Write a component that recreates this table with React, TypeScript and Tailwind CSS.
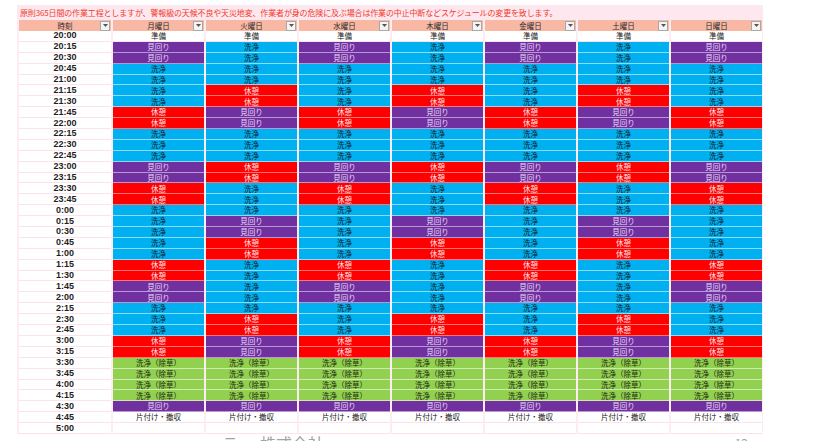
type Code = 'P' | 'M' | 'W' | 'R' | 'G' | 'K' | 'E'

type CellStyle = {
  label: string
  className: string
}

const cellStyles: Record<Code, CellStyle> = {
  P: { label: '準備', className: 'bg-white text-[#222] border-[#fbe3ea]' },
  M: { label: '見回り', className: 'bg-[#7030a0] text-[#eadcf6] border-white/50' },
  W: { label: '洗浄', className: 'bg-[#00b0f0] text-[#10202c] border-white/55' },
  R: { label: '休憩', className: 'bg-[#ff0000] text-[#ffe2e2] border-white/45' },
  G: { label: '洗浄（除草）', className: 'bg-[#92d050] text-[#1d2a10] border-white/55' },
  K: { label: '片付け・撤収', className: 'bg-white text-[#222] border-[#fbe3ea]' },
  E: { label: '', className: 'bg-white text-[#222] border-[#fbe3ea]' },
}

const days = ['月曜日', '火曜日', '水曜日', '木曜日', '金曜日', '土曜日', '日曜日']

const schedule: [string, string][] = [
  ['20:00', 'PPPPPPP'],
  ['20:15', 'MWMWMWM'],
  ['20:30', 'MWMWMWM'],
  ['20:45', 'WWWWWWW'],
  ['21:00', 'WWWWWWW'],
  ['21:15', 'WRWRWRW'],
  ['21:30', 'WRWRWRW'],
  ['21:45', 'RMRMRMR'],
  ['22:00', 'RMRMRMR'],
  ['22:15', 'WWWWWWW'],
  ['22:30', 'WWWWWWW'],
  ['22:45', 'WWWWWWW'],
  ['23:00', 'MRMRMRM'],
  ['23:15', 'MRMRMRM'],
  ['23:30', 'RWRWRWR'],
  ['23:45', 'RWRWRWR'],
  ['0:00', 'WWWWWWW'],
  ['0:15', 'WMWMWMW'],
  ['0:30', 'WMWMWMW'],
  ['0:45', 'WRWRWRW'],
  ['1:00', 'WRWRWRW'],
  ['1:15', 'RWRWRWR'],
  ['1:30', 'RWRWRWR'],
  ['1:45', 'MWMWMWM'],
  ['2:00', 'MWMWMWM'],
  ['2:15', 'WWWWWWW'],
  ['2:30', 'WRWRWRW'],
  ['2:45', 'WRWRWRW'],
  ['3:00', 'RMRMRMR'],
  ['3:15', 'RMRMRMR'],
  ['3:30', 'GGGGGGG'],
  ['3:45', 'GGGGGGG'],
  ['4:00', 'GGGGGGG'],
  ['4:15', 'GGGGGGG'],
  ['4:30', 'MMMMMMM'],
  ['4:45', 'KKKKKKK'],
  ['5:00', 'EEEEEEE'],
]

function FilterButton() {
  return (
    <span className="absolute top-[0.5px] right-[1px] flex h-[10px] w-[10px] items-center justify-center border border-[#a8a8a8] bg-[#f4f4f4]">
      <svg width="5" height="3" viewBox="0 0 5 3">
        <path d="M0 0h5L2.5 3z" fill="#555" />
      </svg>
    </span>
  )
}

function HeaderCell({ label }: { label: string }) {
  return (
    <div className="relative flex items-center justify-center bg-[#f9b8a4] text-[7.5px] leading-none text-[#2a2a2a]">
      {label}
      <FilterButton />
    </div>
  )
}

export default function App() {
  return (
    <div className="h-[441px] w-[816px] overflow-hidden bg-white pt-[5px] pl-[17px] font-['Noto_Sans_CJK_JP',sans-serif]">
      <div className="h-[15px] w-[746px] bg-[#fde8ef] pl-[3px] text-[8px] leading-[15px] tracking-[-0.15px] text-[#f23a2c]">
        原則365日間の作業工程としますが、警報級の天候不良や天災地変、作業者が身の危険に及ぶ場合は作業の中止中断などスケジュールの変更を致します。
      </div>

      <div className="grid w-[746px] grid-cols-[92px_repeat(7,91px)] grid-rows-[11px_repeat(37,10.9px)] gap-x-[2px] bg-[#fdedf2] pl-[2px]">
        <HeaderCell label="時刻" />
        {days.map((day) => (
          <HeaderCell key={day} label={day} />
        ))}

        {schedule.map(([time, codes]) => (
          <div key={time} className="contents">
            <div className="flex items-center justify-center border-b border-[#fbe3ea] bg-white font-['Liberation_Sans',sans-serif] text-[9px] font-bold leading-none text-[#1e1e1e]">
              {time}
            </div>
            {codes.split('').map((code, index) => {
              const cell = cellStyles[code as Code]
              return (
                <div
                  key={index}
                  className={[
                    'flex items-center justify-center border-b text-[7.5px] leading-none',
                    cell.className,
                  ].join(' ')}
                >
                  {cell.label}
                </div>
              )
            })}
          </div>
        ))}
      </div>

      <div className="mt-[1px] flex w-[746px] text-[16px] leading-[16px] text-[#a3a3a3]">
        <span className="ml-[205px]">テー</span>
        <span className="ml-[6px]">株式会社</span>
        <span className="mr-[15px] ml-auto text-[12px]">12</span>
      </div>
    </div>
  )
}
